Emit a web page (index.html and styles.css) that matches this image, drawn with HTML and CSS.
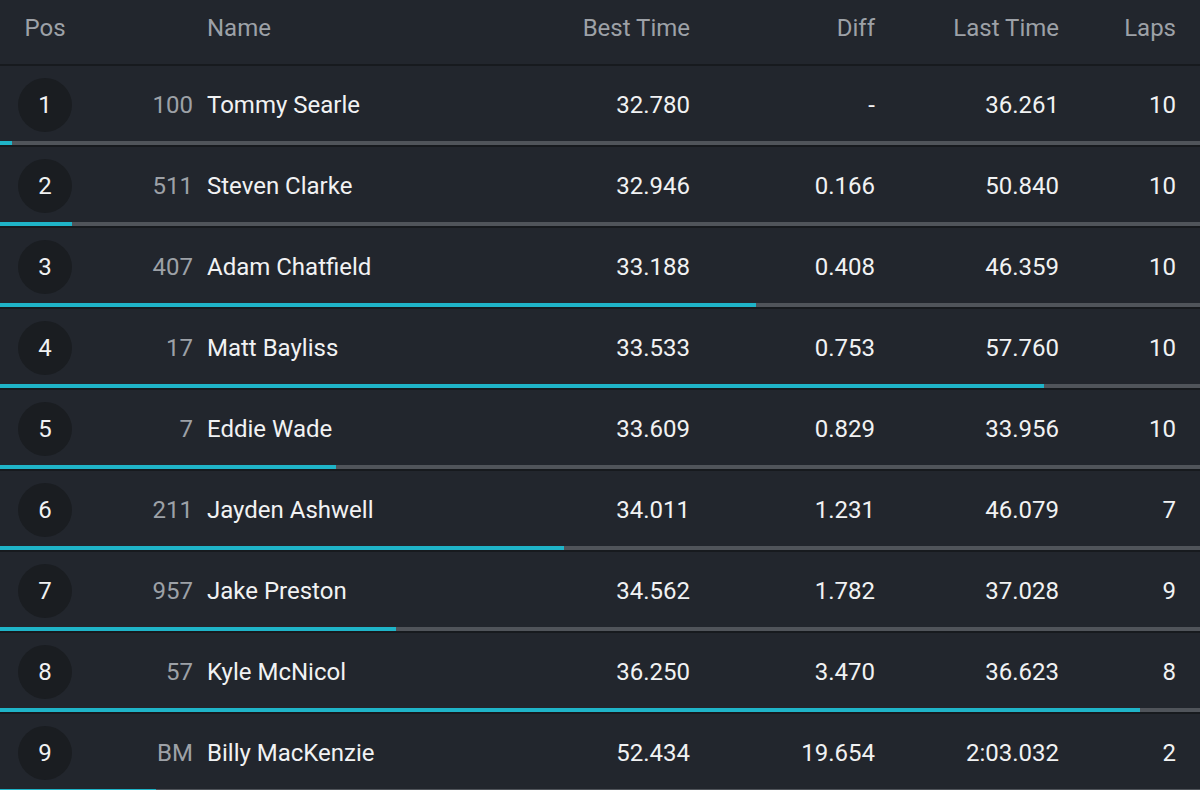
FILE: index.html
```html
<!DOCTYPE html>
<html>
<head>
<meta charset="utf-8">
<link rel="stylesheet" href="styles.css">
</head>
<body>
<div class="board">
  <div class="head">
    <div class="c-pos">Pos</div>
    <div class="c-num"></div>
    <div class="c-name">Name</div>
    <div class="c-r">Best Time</div>
    <div class="c-r">Diff</div>
    <div class="c-r">Last Time</div>
    <div class="c-r">Laps</div>
  </div>

  <div class="row">
    <div class="cells">
      <div class="c-pos"><span class="circle">1</span></div>
      <div class="c-num">100</div>
      <div class="c-name">Tommy Searle</div>
      <div class="c-r">32.780</div>
      <div class="c-r">-</div>
      <div class="c-r">36.261</div>
      <div class="c-r">10</div>
    </div>
    <div class="bar"><div class="fill" style="width:12px"></div></div>
  </div>

  <div class="row">
    <div class="cells">
      <div class="c-pos"><span class="circle">2</span></div>
      <div class="c-num">511</div>
      <div class="c-name">Steven Clarke</div>
      <div class="c-r">32.946</div>
      <div class="c-r">0.166</div>
      <div class="c-r">50.840</div>
      <div class="c-r">10</div>
    </div>
    <div class="bar"><div class="fill" style="width:72px"></div></div>
  </div>

  <div class="row">
    <div class="cells">
      <div class="c-pos"><span class="circle">3</span></div>
      <div class="c-num">407</div>
      <div class="c-name">Adam Chatfield</div>
      <div class="c-r">33.188</div>
      <div class="c-r">0.408</div>
      <div class="c-r">46.359</div>
      <div class="c-r">10</div>
    </div>
    <div class="bar"><div class="fill" style="width:756px"></div></div>
  </div>

  <div class="row">
    <div class="cells">
      <div class="c-pos"><span class="circle">4</span></div>
      <div class="c-num">17</div>
      <div class="c-name">Matt Bayliss</div>
      <div class="c-r">33.533</div>
      <div class="c-r">0.753</div>
      <div class="c-r">57.760</div>
      <div class="c-r">10</div>
    </div>
    <div class="bar"><div class="fill" style="width:1044px"></div></div>
  </div>

  <div class="row">
    <div class="cells">
      <div class="c-pos"><span class="circle">5</span></div>
      <div class="c-num">7</div>
      <div class="c-name">Eddie Wade</div>
      <div class="c-r">33.609</div>
      <div class="c-r">0.829</div>
      <div class="c-r">33.956</div>
      <div class="c-r">10</div>
    </div>
    <div class="bar"><div class="fill" style="width:336px"></div></div>
  </div>

  <div class="row">
    <div class="cells">
      <div class="c-pos"><span class="circle">6</span></div>
      <div class="c-num">211</div>
      <div class="c-name">Jayden Ashwell</div>
      <div class="c-r">34.011</div>
      <div class="c-r">1.231</div>
      <div class="c-r">46.079</div>
      <div class="c-r">7</div>
    </div>
    <div class="bar"><div class="fill" style="width:564px"></div></div>
  </div>

  <div class="row">
    <div class="cells">
      <div class="c-pos"><span class="circle">7</span></div>
      <div class="c-num">957</div>
      <div class="c-name">Jake Preston</div>
      <div class="c-r">34.562</div>
      <div class="c-r">1.782</div>
      <div class="c-r">37.028</div>
      <div class="c-r">9</div>
    </div>
    <div class="bar"><div class="fill" style="width:396px"></div></div>
  </div>

  <div class="row">
    <div class="cells">
      <div class="c-pos"><span class="circle">8</span></div>
      <div class="c-num">57</div>
      <div class="c-name">Kyle McNicol</div>
      <div class="c-r">36.250</div>
      <div class="c-r">3.470</div>
      <div class="c-r">36.623</div>
      <div class="c-r">8</div>
    </div>
    <div class="bar"><div class="fill" style="width:1140px"></div></div>
  </div>

  <div class="row">
    <div class="cells">
      <div class="c-pos"><span class="circle">9</span></div>
      <div class="c-num">BM</div>
      <div class="c-name">Billy MacKenzie</div>
      <div class="c-r">52.434</div>
      <div class="c-r">19.654</div>
      <div class="c-r">2:03.032</div>
      <div class="c-r">2</div>
    </div>
    <div class="bar"><div class="fill" style="width:156px"></div></div>
  </div>
</div>
</body>
</html>
```
FILE: styles.css
```css
* { box-sizing: border-box; }
html, body {
  margin: 0;
  padding: 0;
  background: #22262d;
  height: 790px;
  overflow: hidden;
}
body {
  font-family: Roboto, "Liberation Sans", sans-serif;
  font-size: 24px;
  line-height: 28px;
  color: #f1f2f3;
}
.board {
  width: 1200px;
}
.head, .cells {
  display: grid;
  grid-template-columns: 90px 103px 347px 150px 185px 184px 117px;
  padding-right: 24px;
}
.head {
  height: 64px;
  padding-top: 14px;
  align-items: start;
  color: #9da1a7;
}
.cells {
  height: 75px;
  padding-top: 2px;
  align-items: center;
}
.c-pos {
  display: flex;
  justify-content: center;
}
.c-num {
  text-align: right;
  color: #9da1a7;
}
.c-name {
  padding-left: 14px;
}
.c-r {
  text-align: right;
}
.row {
  border-top: 2px solid #171a1e;
}
.circle {
  width: 54px;
  height: 54px;
  border-radius: 50%;
  background: #1a1d21;
  display: flex;
  align-items: center;
  justify-content: center;
}
.bar {
  height: 4px;
  background: #50545a;
}
.fill {
  height: 100%;
  background: #1fb4c8;
}
```
